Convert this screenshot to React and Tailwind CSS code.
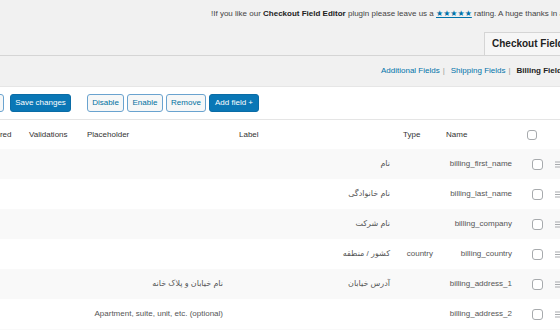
import React from 'react'

const rows = [
  { label: 'نام', name: 'billing_first_name' },
  { label: 'نام خانوادگی', name: 'billing_last_name' },
  { label: 'نام شرکت', name: 'billing_company' },
  { label: 'کشور / منطقه', type: 'country', name: 'billing_country' },
  { label: 'آدرس خیابان', placeholder: 'نام خیابان و پلاک خانه', name: 'billing_address_1' },
  { placeholder: 'Apartment, suite, unit, etc. (optional)', name: 'billing_address_2' },
  { label: 'شهر', name: 'billing_city' },
]

const cols = 'grid grid-cols-[51px_57px_152px_164px_43px_79px_27px_30px]'

function Handle() {
  return (
    <svg width="7" height="7" viewBox="0 0 7 7" className="ml-[7px]">
      <rect x="0" y="0.5" width="7" height="1" fill="#a7aaad" />
      <rect x="0" y="3" width="7" height="1" fill="#a7aaad" />
      <rect x="0" y="5.5" width="7" height="1" fill="#a7aaad" />
    </svg>
  )
}

function Check({ className }) {
  return <span className={`block w-[10px] h-[10px] rounded-[3px] border border-[#a7aaad] bg-white ${className}`} />
}

export default function App() {
  return (
    <div className="w-[560px] h-[330px] overflow-hidden bg-[#f1f1f1] font-['Liberation_Sans','DejaVu_Sans',sans-serif] text-[8px] leading-none">
      {/* rating notice */}
      <div className="h-[32px] pl-[211px] pt-[10px] whitespace-nowrap text-[#444]">
        !If you like our <b className="text-[#222]">Checkout Field Editor</b> plugin please leave us a{' '}
        <a className="text-[#0073aa] underline">★★★★★</a> rating. A huge thanks in advance
      </div>

      {/* tabs */}
      <div className="h-[24px] flex pl-[484px] border-b border-[#d5d5d5]">
        <div className="h-[24px] -mb-px flex items-center px-[7px] border border-[#d5d5d5] bg-[#f6f6f6] text-[10px] font-bold text-[#222] whitespace-nowrap">
          Checkout Fields
        </div>
      </div>

      {/* sub navigation */}
      <div className="h-[30px] flex items-center pl-[381px] whitespace-nowrap text-[#0073aa]">
        <a>Additional Fields</a>
        <span className="text-[#999] mx-[3px]">|</span>
        <a className="ml-[3px]">Shipping Fields</a>
        <span className="text-[#999] mx-[3px]">|</span>
        <b className="ml-[3px] text-[#222]">Billing Fields</b>
      </div>

      <div className="bg-white border-t border-[#e6e6e6]">
        {/* toolbar */}
        <div className="h-[33px] flex items-center -ml-[40px] border-b border-[#e5e5e5]">
          <button className="w-[44px] h-[18px] rounded-[3px] border border-[#6aa3cf] bg-[#f6f7f7] text-[#0071a1]">Reset</button>
          <button className="ml-[6px] w-[61px] h-[18px] rounded-[3px] border border-[#0a6ca6] bg-[#0a77b6] text-white">Save changes</button>
          <button className="ml-[16px] w-[37px] h-[18px] rounded-[3px] border border-[#6aa3cf] bg-[#f6f7f7] text-[#0071a1]">Disable</button>
          <button className="ml-[3px] w-[36px] h-[18px] rounded-[3px] border border-[#6aa3cf] bg-[#f6f7f7] text-[#0071a1]">Enable</button>
          <button className="ml-[3px] w-[40px] h-[18px] rounded-[3px] border border-[#6aa3cf] bg-[#f6f7f7] text-[#0071a1]">Remove</button>
          <button className="ml-[3px] w-[50px] h-[18px] rounded-[3px] border border-[#0a6ca6] bg-[#0a77b6] text-white">Add field +</button>
        </div>

        {/* table */}
        <div className="-ml-[25px]">
          <div className={`${cols} h-[29px] items-center text-[#333] whitespace-nowrap`}>
            <span className="pl-[4px]">Required</span>
            <span className="pl-[3px]">Validations</span>
            <span className="pl-[4px]">Placeholder</span>
            <span className="pl-[4px]">Label</span>
            <span className="pl-[4px]">Type</span>
            <span className="pl-[4px]">Name</span>
            <Check className="ml-[6px]" />
            <span />
          </div>
          {rows.map((r, i) => (
            <div
              key={r.name}
              className={`${cols} h-[30px] items-center text-[#555] whitespace-nowrap ${i % 2 === 0 ? 'bg-[#f9f9f9]' : 'bg-white'}`}
            >
              <span />
              <span />
              <span dir="rtl" className="text-right pl-[4px] pr-[12px]">{r.placeholder}</span>
              <span dir="rtl" className="text-right pr-[9px]">{r.label}</span>
              <span className="text-right pr-[9px]">{r.type}</span>
              <span className="text-right pr-[9px]">{r.name}</span>
              <Check className="ml-[11px] w-[11px] h-[11px]" />
              <Handle />
            </div>
          ))}
        </div>
      </div>
    </div>
  )
}
